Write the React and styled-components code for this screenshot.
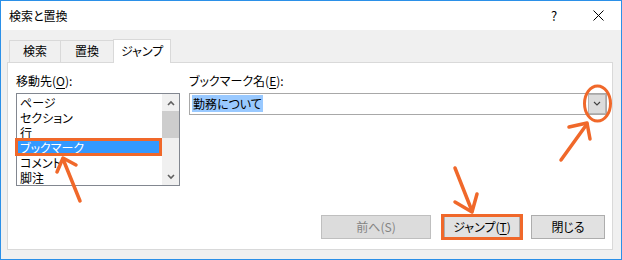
import styled, { createGlobalStyle } from "styled-components";

const GlobalStyle = createGlobalStyle`
  body {
    margin: 0;
    background: #ffffff;
  }
`;

const ORANGE = "#f0682a";

const Window = styled.div`
  position: relative;
  width: 622px;
  height: 260px;
  box-sizing: border-box;
  border: 1px solid #2b90e8;
  background: #f0f0f0;
  display: flex;
  flex-direction: column;
  font-family: "Noto Sans CJK JP", "Noto Sans", sans-serif;
  font-feature-settings: "palt";
  font-size: 12px;
  color: #000;
`;

const TitleBar = styled.div`
  height: 29px;
  background: #fff;
  display: flex;
  align-items: center;
  padding-left: 8px;
`;

const Title = styled.span`
  flex: 1;
  line-height: 16px;
`;

const CaptionBtn = styled.div`
  width: ${(p) => p.$w}px;
  height: 29px;
  display: flex;
  align-items: center;
  justify-content: center;
  font-size: 13px;
`;

const Body = styled.div`
  flex: 1;
  display: flex;
  flex-direction: column;
  padding: 9px 8px 9px 6px;
`;

const TabRow = styled.div`
  display: flex;
  align-items: flex-end;
  height: 23px;
  padding-left: 2px;
`;

const Tab = styled.div`
  position: relative;
  box-sizing: border-box;
  width: ${(p) => p.$w}px;
  height: ${(p) => (p.$active ? 24 : 22)}px;
  margin-bottom: ${(p) => (p.$active ? -1 : 0)}px;
  margin-left: ${(p) => (p.$first ? 0 : -1)}px;
  border: 1px solid #d9d9d9;
  border-bottom: none;
  background: ${(p) => (p.$active ? "#fff" : "#f0f0f0")};
  z-index: ${(p) => (p.$active ? 1 : 0)};
  display: flex;
  justify-content: center;
  padding-top: ${(p) => (p.$active ? 3 : 2)}px;
  line-height: 16px;
`;

const Panel = styled.div`
  flex: 1;
  width: 606px;
  box-sizing: border-box;
  border: 1px solid #d9d9d9;
  background: #fff;
  padding: 10px 5px 10px 8px;
  display: flex;
  flex-direction: column;
`;

const Fields = styled.div`
  display: grid;
  grid-template-columns: 164px 1fr;
  column-gap: 9px;
`;

const Field = styled.div`
  display: flex;
  flex-direction: column;
`;

const Label = styled.div`
  line-height: 16px;
  margin-bottom: 4px;
`;

const Key = styled.u`
  text-underline-offset: 2px;
`;

const ListBox = styled.div`
  height: 93px;
  box-sizing: border-box;
  border: 1px solid #828790;
  display: flex;
`;

const Items = styled.div`
  flex: 1;
  padding-top: 1px;
`;

const Item = styled.div`
  position: relative;
  height: 15px;
  line-height: 15px;
  padding-left: 3px;
  background: ${(p) => (p.$selected ? "#3399ff" : "transparent")};
  color: ${(p) => (p.$selected ? "#fff" : "#000")};

  ${(p) =>
    p.$selected &&
    `
    &::after {
      content: "";
      position: absolute;
      top: -2px;
      bottom: -1px;
      left: -2px;
      right: 0;
      border: 3px solid ${ORANGE};
    }
  `}
`;

const ScrollBar = styled.div`
  width: 17px;
  background: #f0f0f0;
  display: flex;
  flex-direction: column;
`;

const ScrollArrow = styled.div`
  height: 17px;
  display: flex;
  align-items: center;
  justify-content: center;
  margin-top: ${(p) => (p.$bottom ? "auto" : "0")};
`;

const Thumb = styled.div`
  height: 27px;
  background: #cdcdcd;
`;

const Combo = styled.div`
  height: 22px;
  box-sizing: border-box;
  border: 1px solid #a8a8a8;
  display: flex;
  align-items: center;
  padding-left: 2px;
`;

const Selection = styled.span`
  flex: 1;
  line-height: 16px;

  span {
    background: #99c9ff;
    padding: 0 1px;
  }
`;

const DropBtn = styled.div`
  position: relative;
  width: 18px;
  height: 20px;
  box-sizing: border-box;
  border: 1px solid #b4b4b4;
  background: #dcdcdc;
  display: flex;
  align-items: center;
  justify-content: center;
`;

const ButtonRow = styled.div`
  margin-top: auto;
  margin-right: 2px;
  display: flex;
  justify-content: flex-end;
  gap: 11px;
`;

const Button = styled.div`
  position: relative;
  width: ${(p) => p.$w}px;
  height: 24px;
  box-sizing: border-box;
  border: 1px solid ${(p) => (p.$disabled ? "#bfbfbf" : "#adadad")};
  background: ${(p) => (p.$disabled ? "#dcdcdc" : "#e1e1e1")};
  color: ${(p) => (p.$disabled ? "#838383" : "#000")};
  display: flex;
  align-items: center;
  justify-content: center;
  line-height: 16px;
  margin-right: ${(p) => p.$gap || 0}px;

  ${(p) =>
    p.$marked &&
    `
    &::after {
      content: "";
      position: absolute;
      top: -2px;
      bottom: -2px;
      left: -4px;
      right: -4px;
      border: 3px solid ${ORANGE};
    }
  `}
`;

const Annotations = styled.svg`
  position: absolute;
  top: 0;
  left: 0;
  pointer-events: none;
  z-index: 5;
`;

const Chevron = ({ up, size = 8, color = "#606060", width = 1.6 }) => (
  <svg width={size} height={size / 2 + 2} viewBox="0 0 8 6">
    <path
      d={up ? "M1 5 L4 2 L7 5" : "M1 1 L4 4 L7 1"}
      fill="none"
      stroke={color}
      strokeWidth={width}
    />
  </svg>
);

const listItems = ["ページ", "セクション", "行", "ブックマーク", "コメント", "脚注"];

export default function App() {
  return (
    <>
      <GlobalStyle />
      <Window>
        <TitleBar>
          <Title>検索と置換</Title>
          <CaptionBtn $w={44}>?</CaptionBtn>
          <CaptionBtn $w={45}>
            <svg width="11" height="11" viewBox="0 0 11 11">
              <path d="M0.5 0.5 L10.5 10.5 M10.5 0.5 L0.5 10.5" stroke="#000" strokeWidth="1" />
            </svg>
          </CaptionBtn>
        </TitleBar>
        <Body>
          <TabRow>
            <Tab $w={52} $first>検索</Tab>
            <Tab $w={54}>置換</Tab>
            <Tab $w={58} $active>ジャンプ</Tab>
          </TabRow>
          <Panel>
            <Fields>
              <Field>
                <Label>
                  移動先(<Key>O</Key>):
                </Label>
                <ListBox>
                  <Items>
                    {listItems.map((t) => (
                      <Item key={t} $selected={t === "ブックマーク"}>
                        {t}
                      </Item>
                    ))}
                  </Items>
                  <ScrollBar>
                    <ScrollArrow>
                      <Chevron up />
                    </ScrollArrow>
                    <Thumb />
                    <ScrollArrow $bottom>
                      <Chevron />
                    </ScrollArrow>
                  </ScrollBar>
                </ListBox>
              </Field>
              <Field>
                <Label>
                  ブックマーク名(<Key>E</Key>):
                </Label>
                <Combo>
                  <Selection>
                    <span>勤務について</span>
                  </Selection>
                  <DropBtn>
                    <Chevron size={8} color="#404040" width={1.1} />
                  </DropBtn>
                </Combo>
              </Field>
            </Fields>
            <ButtonRow>
              <Button $w={110} $disabled $gap={2}>
                前へ(S)
              </Button>
              <Button $w={76} $marked>
                ジャンプ(<Key>T</Key>)
              </Button>
              <Button $w={74}>閉じる</Button>
            </ButtonRow>
          </Panel>
        </Body>
        <Annotations width="620" height="258" viewBox="1 1 620 258">
          <g fill="none" stroke={ORANGE} strokeWidth="3.5" strokeLinecap="round" strokeLinejoin="round">
            <path d="M80 201 L63 159" />
            <path d="M57 172 L63 158 L76 165" />
            <path d="M455 168 L472 211" />
            <path d="M455 202 L472 212 L477 194" />
            <path d="M561 160 L587 124" />
            <path d="M569 127 L587 123 L590 139" />
            <ellipse cx="597.5" cy="103.5" rx="13" ry="17.5" strokeWidth="3" />
          </g>
        </Annotations>
      </Window>
    </>
  );
}
